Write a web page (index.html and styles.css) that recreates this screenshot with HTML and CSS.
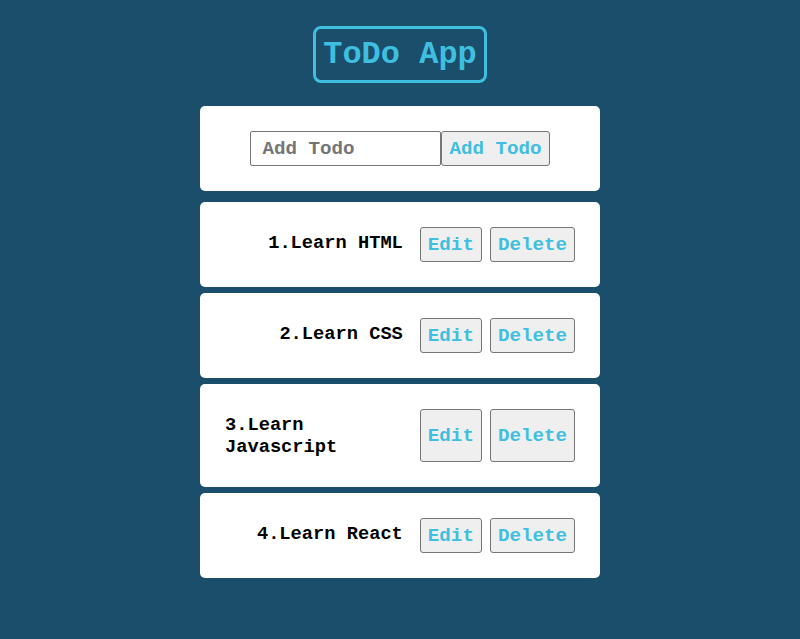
FILE: index.html
```html
<!DOCTYPE html>
<html lang="en">
<head>
<meta charset="utf-8">
<title>ToDo App</title>
<link rel="stylesheet" href="styles.css">
</head>
<body>
<div class="app">
  <h1 class="title">ToDo App</h1>
  <form class="card add-form">
    <input class="add-input" type="text" placeholder="Add Todo">
    <button class="btn add-btn" type="button">Add Todo</button>
  </form>
  <ul class="todo-list">
    <li class="card todo-item">
      <p class="todo-text">1.Learn HTML</p>
      <button class="btn edit-btn" type="button">Edit</button>
      <button class="btn delete-btn" type="button">Delete</button>
    </li>
    <li class="card todo-item">
      <p class="todo-text">2.Learn CSS</p>
      <button class="btn edit-btn" type="button">Edit</button>
      <button class="btn delete-btn" type="button">Delete</button>
    </li>
    <li class="card todo-item">
      <p class="todo-text">3.Learn Javascript</p>
      <button class="btn edit-btn" type="button">Edit</button>
      <button class="btn delete-btn" type="button">Delete</button>
    </li>
    <li class="card todo-item">
      <p class="todo-text">4.Learn React</p>
      <button class="btn edit-btn" type="button">Edit</button>
      <button class="btn delete-btn" type="button">Delete</button>
    </li>
  </ul>
</div>
</body>
</html>
```
FILE: styles.css
```css
html, body {
  margin: 0;
  padding: 0;
}

body {
  background: #1b4e6b;
  font-family: "Liberation Mono", "Courier New", monospace;
  font-weight: bold;
  min-height: 639px;
}

.app {
  display: flex;
  flex-direction: column;
  align-items: center;
  padding-top: 26px;
}

.title {
  margin: 0 0 23px;
  padding: 7px;
  border: 3px solid #3ebfe0;
  border-radius: 8px;
  color: #3ebfe0;
  font-size: 32px;
  font-weight: bold;
  line-height: normal;
}

.card {
  width: 400px;
  box-sizing: border-box;
  background: #ffffff;
  border-radius: 5px;
  padding: 25px;
}

.add-form {
  display: flex;
  justify-content: center;
  margin: 0 0 11px;
}

.add-input {
  width: 191px;
  height: 35px;
  box-sizing: border-box;
  margin: 0;
  border: 1px solid #767676;
  border-radius: 2px;
  padding: 0 11px;
  font-family: inherit;
  font-weight: bold;
  font-size: 19.2px;
  color: #000;
}

.add-input::placeholder {
  color: #757575;
}

.btn {
  height: 35px;
  box-sizing: border-box;
  margin: 0;
  border: 1px solid #767676;
  border-radius: 3px;
  background: #efefef;
  color: #3ebfe0;
  padding: 0 7px;
  font-family: inherit;
  font-weight: bold;
  font-size: 19.2px;
}

.todo-list {
  list-style: none;
  margin: 0;
  padding: 0;
  display: flex;
  flex-direction: column;
  gap: 6px;
}

.todo-item {
  display: flex;
  justify-content: flex-end;
  align-items: stretch;
}

.todo-text {
  margin: 6px 17px 4px 0;
  font-size: 18.72px;
  line-height: 21.5px;
  color: #000;
}

.todo-item .btn {
  height: auto;
  min-height: 35px;
}

.delete-btn {
  margin-left: 8px;
}
```
